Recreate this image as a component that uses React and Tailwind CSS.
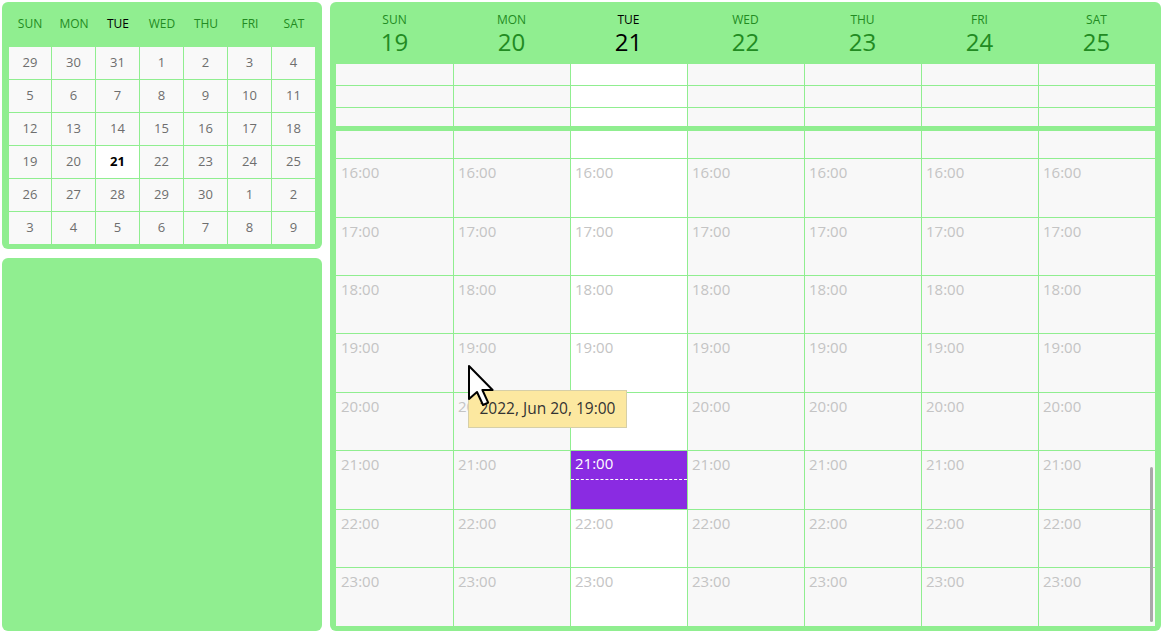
import React from 'react';

const FONT = { fontFamily: '"Open Sans", "Noto Sans", sans-serif' };

const miniDays = ['SUN', 'MON', 'TUE', 'WED', 'THU', 'FRI', 'SAT'];
const miniWeeks = [
  [29, 30, 31, 1, 2, 3, 4],
  [5, 6, 7, 8, 9, 10, 11],
  [12, 13, 14, 15, 16, 17, 18],
  [19, 20, 21, 22, 23, 24, 25],
  [26, 27, 28, 29, 30, 1, 2],
  [3, 4, 5, 6, 7, 8, 9],
];

const weekDays = [
  { name: 'SUN', num: 19 },
  { name: 'MON', num: 20 },
  { name: 'TUE', num: 21, today: true },
  { name: 'WED', num: 22 },
  { name: 'THU', num: 23 },
  { name: 'FRI', num: 24 },
  { name: 'SAT', num: 25 },
];

const hours = [
  { label: '16:00', h: 'h-[59px]' },
  { label: '17:00', h: 'h-[58px]' },
  { label: '18:00', h: 'h-[58px]' },
  { label: '19:00', h: 'h-[59px]' },
  { label: '20:00', h: 'h-[58px]' },
  { label: '21:00', h: 'h-[59px]' },
  { label: '22:00', h: 'h-[58px]' },
  { label: '23:00', h: 'h-[59px]' },
];

const allDayRows = ['h-[22px] border-b', 'h-[22px] border-b', 'h-[18px]'];

function MiniCalendar() {
  return (
    <div className="h-[247px] bg-[#90ee90] rounded-md px-[6px] pb-[4px] flex flex-col">
      <div className="h-[44px] grid grid-cols-7 items-center">
        {miniDays.map((d) => (
          <div
            key={d}
            className={`text-center text-[12px] ${d === 'TUE' ? 'text-black' : 'text-[#228b22]'}`}
          >
            {d}
          </div>
        ))}
      </div>
      <div className="border-t border-[#90ee90]">
        {miniWeeks.map((week, wi) => (
          <div key={wi} className="grid grid-cols-7 h-[33px]">
            {week.map((n, di) => {
              const today = wi === 3 && di === 2;
              return (
                <div
                  key={di}
                  className={`flex items-center justify-center border-b border-r border-[#90ee90] text-[13px] ${
                    di === 0 ? 'border-l' : ''
                  } ${today ? 'bg-white text-black font-bold' : 'bg-[#f9f9f9] text-[#6e6e6e]'}`}
                >
                  {n}
                </div>
              );
            })}
          </div>
        ))}
      </div>
    </div>
  );
}

function WeekView() {
  return (
    <div className="flex-1 h-full bg-[#90ee90] rounded-md px-[6px] pb-[5px] flex flex-col">
      {/* header */}
      <div className="h-[62px] grid grid-cols-7 shrink-0">
        {weekDays.map((d) => (
          <div
            key={d.name}
            className={`flex flex-col items-center pt-[11px] ${d.today ? 'text-black' : 'text-[#228b22]'}`}
          >
            <span className="text-[12px] leading-[14px]">{d.name}</span>
            <span className="text-[24px] leading-[30px]">{d.num}</span>
          </div>
        ))}
      </div>

      {/* all-day rows */}
      <div className="shrink-0">
        {allDayRows.map((cls, ri) => (
          <div key={ri} className={`grid grid-cols-7 border-[#90ee90] ${cls}`}>
            {weekDays.map((d, di) => (
              <div
                key={di}
                className={`border-[#90ee90] ${di > 0 ? 'border-l' : ''} ${d.today ? 'bg-white' : 'bg-[#f8f8f8]'}`}
              />
            ))}
          </div>
        ))}
      </div>

      <div className="h-[5px] shrink-0" />

      {/* timed grid */}
      <div className="flex-1 overflow-hidden relative">
        <div className="grid grid-cols-7 h-[28px] border-b border-[#90ee90]">
          {weekDays.map((d, di) => (
            <div
              key={di}
              className={`border-[#90ee90] ${di > 0 ? 'border-l' : ''} ${d.today ? 'bg-white' : 'bg-[#f8f8f8]'}`}
            />
          ))}
        </div>
        {hours.map((hr) => (
          <div key={hr.label} className={`grid grid-cols-7 border-b border-[#90ee90] ${hr.h}`}>
            {weekDays.map((d, di) => {
              const event = d.today && hr.label === '21:00';
              if (event) {
                return (
                  <div key={di} className="border-l border-[#90ee90] bg-[#8a2be2] relative">
                    <div className="text-white text-[15px] leading-[18px] pl-[4px] pt-[3px]">21:00</div>
                    <div className="absolute left-0 right-0 top-[28px] border-t border-dashed border-white" />
                  </div>
                );
              }
              return (
                <div
                  key={di}
                  className={`border-[#90ee90] text-[#c4c4c4] text-[15px] leading-[18px] pt-[4px] ${
                    di > 0 ? 'border-l pl-[4px]' : 'pl-[5px]'
                  } ${d.today ? 'bg-white' : 'bg-[#f8f8f8]'}`}
                >
                  {hr.label}
                </div>
              );
            })}
          </div>
        ))}
        <div className="absolute right-[2px] top-[336px] w-[3px] h-[155px] rounded-full bg-[#a8a8a8]" />
      </div>
    </div>
  );
}

export default function App() {
  return (
    <div className="relative w-[1163px] h-[633px] bg-white p-[2px] flex gap-[8px]" style={FONT}>
      <div className="w-[320px] h-full flex flex-col gap-[9px]">
        <MiniCalendar />
        <div className="flex-1 bg-[#90ee90] rounded-md" />
      </div>
      <WeekView />

      {/* tooltip */}
      <div className="absolute left-[468px] top-[390px] w-[159px] h-[38px] bg-[#fce8a0] border border-[#d6cfa8] flex items-center justify-center text-[15.5px] text-[#333]">
        2022, Jun 20, 19:00
      </div>

      {/* mouse cursor */}
      <svg
        className="absolute left-[467px] top-[364px]"
        width="28"
        height="44"
        viewBox="0 0 14 22"
      >
        <path
          d="M1 1 L1 17.5 L5 14 L8 20.5 L10.6 19.3 L7.7 13 L12.8 13 Z"
          fill="white"
          stroke="black"
          strokeWidth="1"
          strokeLinejoin="round"
        />
      </svg>
    </div>
  );
}
